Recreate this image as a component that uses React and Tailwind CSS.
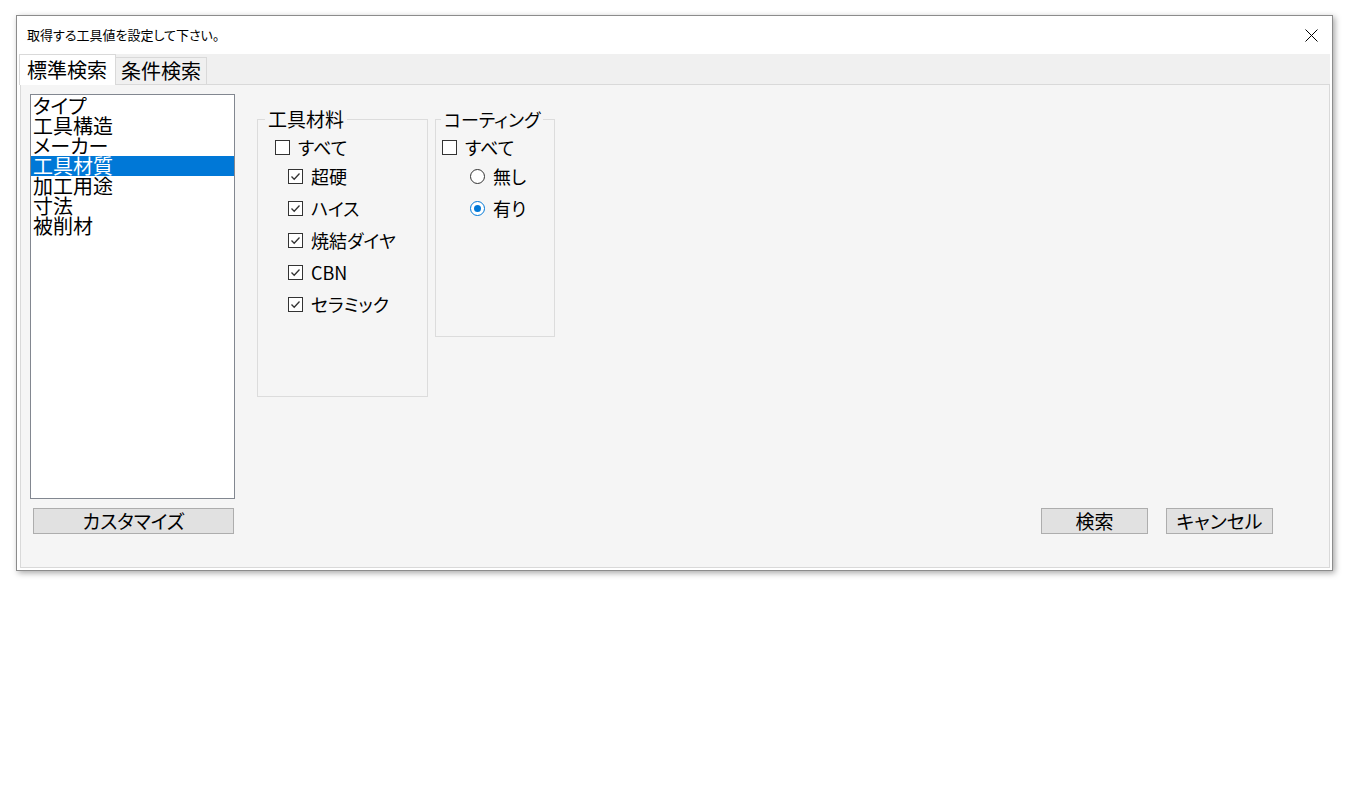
import React from "react";

const items = ["タイプ", "工具構造", "メーカー", "工具材質", "加工用途", "寸法", "被削材"];
const materials = ["超硬", "ハイス", "焼結ダイヤ", "CBN", "セラミック"];

function Box({ checked }) {
  return (
    <span className="w-[15px] h-[15px] border border-[#333333] bg-white flex items-center justify-center shrink-0">
      {checked && (
        <svg width="13" height="13" viewBox="0 0 13 13">
          <polyline points="2.5,6.5 5.2,9.3 10.5,3.5" fill="none" stroke="#333333" strokeWidth="1.3" />
        </svg>
      )}
    </span>
  );
}

function Radio({ checked }) {
  return (
    <span
      className={`w-[15px] h-[15px] rounded-full border bg-white flex items-center justify-center shrink-0 ${
        checked ? "border-[#0078d7]" : "border-[#333333]"
      }`}
    >
      {checked && <span className="w-[7px] h-[7px] rounded-full bg-[#0078d7]" />}
    </span>
  );
}

export default function App() {
  const [selected, setSelected] = React.useState(3);
  const [coat, setCoat] = React.useState(1);

  return (
    <div className="min-h-screen bg-white font-['Noto_Sans_CJK_JP','Liberation_Sans',sans-serif] [font-feature-settings:'palt'] text-black">
      <div className="pl-[16px] pt-[15px]">
        <div className="w-[1317px] h-[556px] border border-[#8c8c8c] bg-white shadow-[2px_2px_6px_rgba(0,0,0,0.35)] flex flex-col">
          {/* title bar */}
          <div className="h-[38px] flex items-center justify-between pl-[10px] pr-[14px] shrink-0">
            <span className="text-[13px] leading-[16px]">取得する工具値を設定して下さい。</span>
            <svg width="13" height="13" viewBox="0 0 13 13">
              <path d="M0.5 0.5 L12.5 12.5 M12.5 0.5 L0.5 12.5" stroke="#000" strokeWidth="1" />
            </svg>
          </div>

          <div className="flex-1 flex flex-col pl-[3px] pr-[2px] pb-[2px]">
            {/* tabs */}
            <div className="h-[30px] bg-[#f0f0f0] flex items-end shrink-0">
              <div className="relative z-10 -ml-px -mb-px h-[31px] w-[97px] bg-white border border-b-0 border-[#d9d9d9] pl-[7px] flex items-center text-[20px] leading-[22px]">
                標準検索
              </div>
              <div className="h-[27px] w-[91px] bg-[#f0f0f0] border border-b-0 border-l-0 border-[#d9d9d9] pl-[5px] flex items-center text-[20px] leading-[22px]">
                条件検索
              </div>
            </div>

            {/* panel */}
            <div className="flex-1 border border-[#d9d9d9] bg-[#f5f5f5] flex pl-[9px] pt-[9px] pr-[56px]">
              <div className="flex flex-col">
                <div className="w-[205px] h-[405px] border border-[#828790] bg-white pt-[1px]">
                  {items.map((it, i) => (
                    <div
                      key={it}
                      onClick={() => setSelected(i)}
                      className={`h-[20px] pl-[2px] text-[20px] leading-[20px] ${
                        i === selected ? "bg-[#0078d7] text-white" : ""
                      }`}
                    >
                      {it}
                    </div>
                  ))}
                </div>
                <button className="mt-[9px] ml-[3px] w-[201px] h-[26px] bg-[#e1e1e1] border border-[#adadad] text-[19px] leading-[22px]">
                  カスタマイズ
                </button>
              </div>

              <div className="flex-1 flex flex-col ml-[22px]">
                <div className="flex gap-[7px] mt-[25px]">
                  {/* 工具材料 */}
                  <div className="relative w-[171px] h-[278px] border border-[#dcdcdc] pt-[14px] pl-[17px]">
                    <span className="absolute left-[7px] -top-[11px] px-[3px] bg-[#f5f5f5] text-[19px] leading-[20px]">
                      工具材料
                    </span>
                    <div className="h-[26px] flex items-center gap-[8px] text-[18px] leading-[20px]">
                      <Box />
                      <span>すべて</span>
                    </div>
                    {materials.map((m) => (
                      <div key={m} className="h-[32px] ml-[13px] flex items-center gap-[8px] text-[18px] leading-[20px]">
                        <Box checked />
                        <span>{m}</span>
                      </div>
                    ))}
                  </div>

                  {/* コーティング */}
                  <div className="relative w-[120px] h-[218px] border border-[#dcdcdc] pt-[14px] pl-[6px]">
                    <span className="absolute left-[5px] -top-[11px] px-[3px] bg-[#f5f5f5] text-[18px] leading-[20px]">
                      コーティング
                    </span>
                    <div className="h-[26px] flex items-center gap-[8px] text-[18px] leading-[20px]">
                      <Box />
                      <span>すべて</span>
                    </div>
                    {["無し", "有り"].map((c, i) => (
                      <div
                        key={c}
                        onClick={() => setCoat(i)}
                        className="h-[32px] ml-[28px] flex items-center gap-[8px] text-[18px] leading-[20px]"
                      >
                        <Radio checked={coat === i} />
                        <span>{c}</span>
                      </div>
                    ))}
                  </div>
                </div>

                <div className="mt-auto flex justify-end gap-[18px] mb-[33px]">
                  <button className="w-[107px] h-[26px] bg-[#e1e1e1] border border-[#adadad] text-[19px] leading-[22px]">
                    検索
                  </button>
                  <button className="w-[107px] h-[26px] bg-[#e1e1e1] border border-[#adadad] text-[19px] leading-[22px]">
                    キャンセル
                  </button>
                </div>
              </div>
            </div>
          </div>
        </div>
      </div>
    </div>
  );
}
